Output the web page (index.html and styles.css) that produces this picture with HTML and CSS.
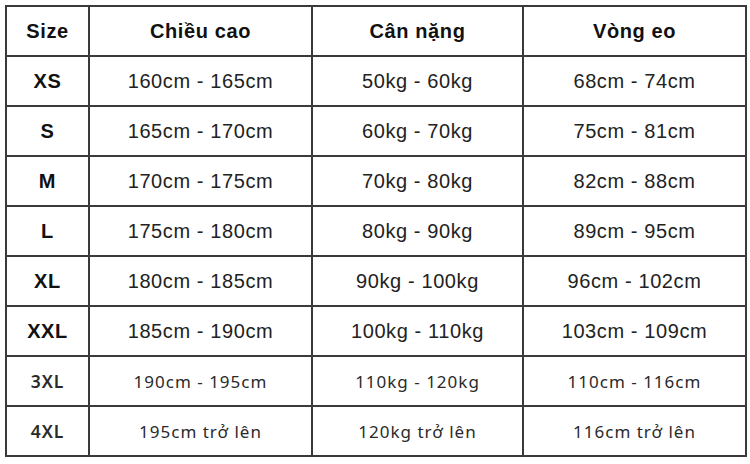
FILE: index.html
```html
<!DOCTYPE html>
<html lang="vi">
<head>
<meta charset="utf-8">
<title>Bảng size</title>
<link rel="stylesheet" href="styles.css">
</head>
<body>
<table class="size-table">
  <colgroup>
    <col class="c-size">
    <col class="c-height">
    <col class="c-weight">
    <col class="c-waist">
  </colgroup>
  <thead>
    <tr><th>Size</th><th>Chiều cao</th><th>Cân nặng</th><th>Vòng eo</th></tr>
  </thead>
  <tbody>
    <tr><th>XS</th><td>160cm - 165cm</td><td>50kg - 60kg</td><td>68cm - 74cm</td></tr>
    <tr><th>S</th><td>165cm - 170cm</td><td>60kg - 70kg</td><td>75cm - 81cm</td></tr>
    <tr><th>M</th><td>170cm - 175cm</td><td>70kg - 80kg</td><td>82cm - 88cm</td></tr>
    <tr><th>L</th><td>175cm - 180cm</td><td>80kg - 90kg</td><td>89cm - 95cm</td></tr>
    <tr><th>XL</th><td>180cm - 185cm</td><td>90kg - 100kg</td><td>96cm - 102cm</td></tr>
    <tr><th>XXL</th><td>185cm - 190cm</td><td>100kg - 110kg</td><td>103cm - 109cm</td></tr>
    <tr class="alt"><th>3XL</th><td>190cm - 195cm</td><td>110kg - 120kg</td><td>110cm - 116cm</td></tr>
    <tr class="alt"><th>4XL</th><td>195cm trở lên</td><td>120kg trở lên</td><td>116cm trở lên</td></tr>
  </tbody>
</table>
</body>
</html>
```
FILE: styles.css
```css
html, body {
  margin: 0;
  padding: 0;
  background: #ffffff;
}
body {
  padding: 5px;
}
.size-table {
  border-collapse: collapse;
  table-layout: fixed;
  width: 740px;
  font-family: "Liberation Sans", Arial, sans-serif;
  color: #222222;
}
.c-size { width: 83px; }
.c-height { width: 223px; }
.c-weight { width: 211px; }
.c-waist { width: 223px; }
.size-table th,
.size-table td {
  border: 2px solid #3a3a3a;
  text-align: center;
  vertical-align: middle;
  padding: 0;
  height: 48px;
  box-sizing: content-box;
  font-size: 20px;
  letter-spacing: 0.6px;
}
.size-table th {
  font-weight: bold;
  color: #111111;
}
.size-table td {
  font-weight: normal;
}
.size-table .alt th,
.size-table .alt td {
  font-family: "Noto Sans", sans-serif;
  font-size: 17px;
  letter-spacing: 1px;
  color: #2a2a2a;
}
.size-table .alt th {
  font-weight: 600;
  font-size: 17.5px;
}
```
